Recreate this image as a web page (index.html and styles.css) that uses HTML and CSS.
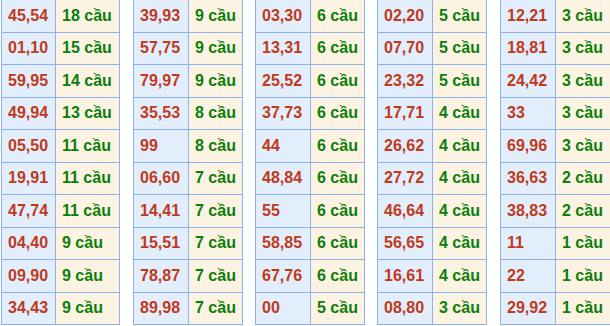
FILE: index.html
```html
<!DOCTYPE html>
<html lang="vi">
<head>
<meta charset="utf-8">
<title>Cầu</title>
<link rel="stylesheet" href="styles.css">
</head>
<body>
<div class="board">
  <div class="tbl wide">
    <div class="num">45,54</div><div class="cnt">18 cầu</div>
    <div class="num">01,10</div><div class="cnt">15 cầu</div>
    <div class="num">59,95</div><div class="cnt">14 cầu</div>
    <div class="num">49,94</div><div class="cnt">13 cầu</div>
    <div class="num">05,50</div><div class="cnt">11 cầu</div>
    <div class="num">19,91</div><div class="cnt">11 cầu</div>
    <div class="num">47,74</div><div class="cnt">11 cầu</div>
    <div class="num">04,40</div><div class="cnt">9 cầu</div>
    <div class="num">09,90</div><div class="cnt">9 cầu</div>
    <div class="num">34,43</div><div class="cnt">9 cầu</div>
  </div>
  <div class="tbl shift">
    <div class="num">39,93</div><div class="cnt">9 cầu</div>
    <div class="num">57,75</div><div class="cnt">9 cầu</div>
    <div class="num">79,97</div><div class="cnt">9 cầu</div>
    <div class="num">35,53</div><div class="cnt">8 cầu</div>
    <div class="num">99</div><div class="cnt">8 cầu</div>
    <div class="num">06,60</div><div class="cnt">7 cầu</div>
    <div class="num">14,41</div><div class="cnt">7 cầu</div>
    <div class="num">15,51</div><div class="cnt">7 cầu</div>
    <div class="num">78,87</div><div class="cnt">7 cầu</div>
    <div class="num">89,98</div><div class="cnt">7 cầu</div>
  </div>
  <div class="tbl">
    <div class="num">03,30</div><div class="cnt">6 cầu</div>
    <div class="num">13,31</div><div class="cnt">6 cầu</div>
    <div class="num">25,52</div><div class="cnt">6 cầu</div>
    <div class="num">37,73</div><div class="cnt">6 cầu</div>
    <div class="num">44</div><div class="cnt">6 cầu</div>
    <div class="num">48,84</div><div class="cnt">6 cầu</div>
    <div class="num">55</div><div class="cnt">6 cầu</div>
    <div class="num">58,85</div><div class="cnt">6 cầu</div>
    <div class="num">67,76</div><div class="cnt">6 cầu</div>
    <div class="num">00</div><div class="cnt">5 cầu</div>
  </div>
  <div class="tbl">
    <div class="num">02,20</div><div class="cnt">5 cầu</div>
    <div class="num">07,70</div><div class="cnt">5 cầu</div>
    <div class="num">23,32</div><div class="cnt">5 cầu</div>
    <div class="num">17,71</div><div class="cnt">4 cầu</div>
    <div class="num">26,62</div><div class="cnt">4 cầu</div>
    <div class="num">27,72</div><div class="cnt">4 cầu</div>
    <div class="num">46,64</div><div class="cnt">4 cầu</div>
    <div class="num">56,65</div><div class="cnt">4 cầu</div>
    <div class="num">16,61</div><div class="cnt">4 cầu</div>
    <div class="num">08,80</div><div class="cnt">3 cầu</div>
  </div>
  <div class="tbl shift last">
    <div class="num">12,21</div><div class="cnt">3 cầu</div>
    <div class="num">18,81</div><div class="cnt">3 cầu</div>
    <div class="num">24,42</div><div class="cnt">3 cầu</div>
    <div class="num">33</div><div class="cnt">3 cầu</div>
    <div class="num">69,96</div><div class="cnt">3 cầu</div>
    <div class="num">36,63</div><div class="cnt">2 cầu</div>
    <div class="num">38,83</div><div class="cnt">2 cầu</div>
    <div class="num">11</div><div class="cnt">1 cầu</div>
    <div class="num">22</div><div class="cnt">1 cầu</div>
    <div class="num">29,92</div><div class="cnt">1 cầu</div>
  </div>
</div>
</body>
</html>
```
FILE: styles.css
```css
html, body {
  margin: 0;
  padding: 0;
  background: #ffffff;
  overflow: hidden;
}
body {
  font-family: "Liberation Sans", Arial, sans-serif;
  font-weight: bold;
  font-size: 16px;
}
.board {
  display: flex;
  align-items: flex-start;
  gap: 12px;
  padding-left: 1px;
  margin-top: -1px;
  width: 609px;
}
.tbl {
  display: grid;
  grid-template-columns: 54px 53px;
  grid-auto-rows: 31.5px;
  gap: 1px;
  padding: 1px;
  background: #8eb1f2;
  flex: none;
}
.tbl.wide {
  grid-template-columns: 53px 63px;
}
.tbl.shift {
  margin-left: 1px;
}
.tbl.last {
  grid-template-columns: 54px 54px;
  padding-right: 0;
}
.num, .cnt {
  display: flex;
  align-items: center;
  padding-left: 6px;
  white-space: nowrap;
}
.num {
  background: #e3eefc;
  color: #c0391b;
}
.cnt {
  background: #fdf3e3;
  color: #0a7f0a;
}
```
